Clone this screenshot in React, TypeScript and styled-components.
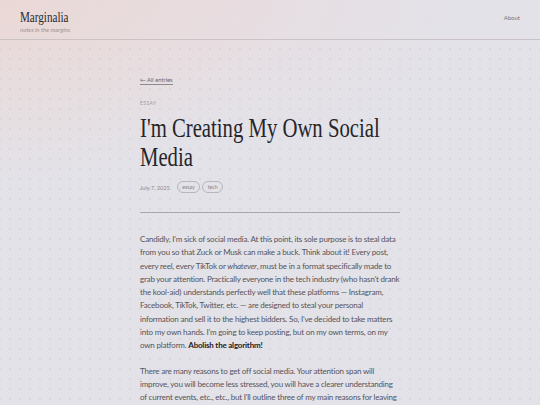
import React from "react";
import styled, { createGlobalStyle } from "styled-components";

const GlobalStyle = createGlobalStyle`
  html, body {
    margin: 0;
    padding: 0;
  }
  body {
    min-height: 100vh;
    background-color: #e3e2e8;
    background-image:
      radial-gradient(ellipse 420px 260px at 0% 0%, rgba(236, 214, 210, 0.85), rgba(236, 214, 210, 0) 70%),
      radial-gradient(ellipse 300px 200px at 45% 0%, rgba(234, 218, 222, 0.6), rgba(234, 218, 222, 0) 70%);
    font-family: Lato, "Open Sans", sans-serif;
    color: #555;
  }
`;

const serif = `"Liberation Serif", "DejaVu Serif", serif`;

const Page = styled.div`
  position: relative;
  min-height: 100vh;

  &::before {
    content: "";
    position: absolute;
    inset: 41px 0 0 0;
    background-image: radial-gradient(circle, rgba(80, 80, 110, 0.11) 0.6px, transparent 0.9px);
    background-size: 10px 10px;
    background-position: 5px 3px;
    pointer-events: none;
  }
`;

const Header = styled.header`
  position: relative;
  height: 40px;
  box-sizing: border-box;
  display: flex;
  justify-content: space-between;
  align-items: flex-start;
  padding: 10px 20px 0;
  border-bottom: 1px solid #cac2c4;
`;

const Brand = styled.div`
  display: flex;
  flex-direction: column;
`;

const Logo = styled.span`
  display: block;
  font-family: ${serif};
  font-size: 15px;
  line-height: 15px;
  color: #2a2a2e;
  width: 70px;
  transform: scaleX(0.74);
  transform-origin: left top;
  white-space: nowrap;
`;

const Tagline = styled.span`
  font-family: Lato, sans-serif;
  font-style: italic;
  font-size: 6px;
  line-height: 7px;
  color: #9a9498;
  margin-top: 1px;
`;

const NavLink = styled.a`
  font-size: 6px;
  color: #77757c;
  margin-top: 4px;
  text-decoration: none;
`;

const Article = styled.article`
  position: relative;
  width: 260px;
  margin: 0 auto;
  padding-top: 26px;
`;

const BackLink = styled.a`
  display: inline-block;
  font-size: 5.8px;
  line-height: 7px;
  color: #6a6870;
  text-decoration: none;
  border-bottom: 0.6px solid #8d8b92;
  padding-bottom: 0.5px;
`;

const Kicker = styled.div`
  margin-top: 15px;
  font-size: 5px;
  line-height: 6px;
  letter-spacing: 0.4px;
  color: #9c9aa2;
`;

const Title = styled.h1`
  margin: 7px 0 0;
  font-family: ${serif};
  font-weight: normal;
  font-size: 28px;
  line-height: 29px;
  color: #26252a;
  width: 351px;
  transform: scaleX(0.74);
  transform-origin: left top;
`;

const Meta = styled.div`
  display: flex;
  align-items: center;
  gap: 2px;
  margin-top: 10px;
  font-size: 5.6px;
  color: #8b8990;
`;

const Date = styled.span`
  margin-right: 5px;
`;

const Tag = styled.span`
  display: inline-flex;
  align-items: center;
  height: 10px;
  padding: 0 4.5px;
  border: 0.7px solid #b8b6bd;
  border-radius: 6px;
  font-size: 5.2px;
  color: #85838a;
`;

const Divider = styled.hr`
  margin: 19px 0 0;
  border: none;
  border-top: 1px solid #a9a7ae;
`;

const Body = styled.div`
  padding-top: 20px;
`;

const Paragraph = styled.p`
  margin: 0 0 12px;
  font-size: 8px;
  line-height: 13.3px;
  letter-spacing: -0.2px;
  color: #55545b;

  em {
    font-style: italic;
  }
  strong {
    font-weight: 700;
    color: #222126;
  }
`;

export default function App() {
  return (
    <>
      <GlobalStyle />
      <Page>
        <Header>
          <Brand>
            <Logo>Marginalia</Logo>
            <Tagline>notes in the margins</Tagline>
          </Brand>
          <NavLink href="#">About</NavLink>
        </Header>
        <Article>
          <BackLink href="#">← All entries</BackLink>
          <Kicker>ESSAY</Kicker>
          <Title>I'm Creating My Own Social Media</Title>
          <Meta>
            <Date>July 7, 2025</Date>
            <Tag>essay</Tag>
            <Tag>tech</Tag>
          </Meta>
          <Divider />
          <Body>
            <Paragraph>
              Candidly, I'm sick of social media. At this point, its sole purpose is to steal data
              from you so that Zuck or Musk can make a buck. Think about it! Every post, every reel,
              every TikTok or <em>whatever</em>, must be in a format specifically made to grab your
              attention. Practically everyone in the tech industry (who hasn't drank the kool-aid)
              understands perfectly well that these platforms — Instagram, Facebook, TikTok,
              Twitter, etc. — are designed to steal your personal information and sell it to the
              highest bidders. So, I've decided to take matters into my own hands. I'm going to keep
              posting, but on my own terms, on my own platform. <strong>Abolish the algorithm!</strong>
            </Paragraph>
            <Paragraph>
              There are many reasons to get off social media. Your attention span will improve, you
              will become less stressed, you will have a clearer understanding of current events,
              etc., etc., but I'll outline three of my main reasons for leaving social media below.
            </Paragraph>
          </Body>
        </Article>
      </Page>
    </>
  );
}
